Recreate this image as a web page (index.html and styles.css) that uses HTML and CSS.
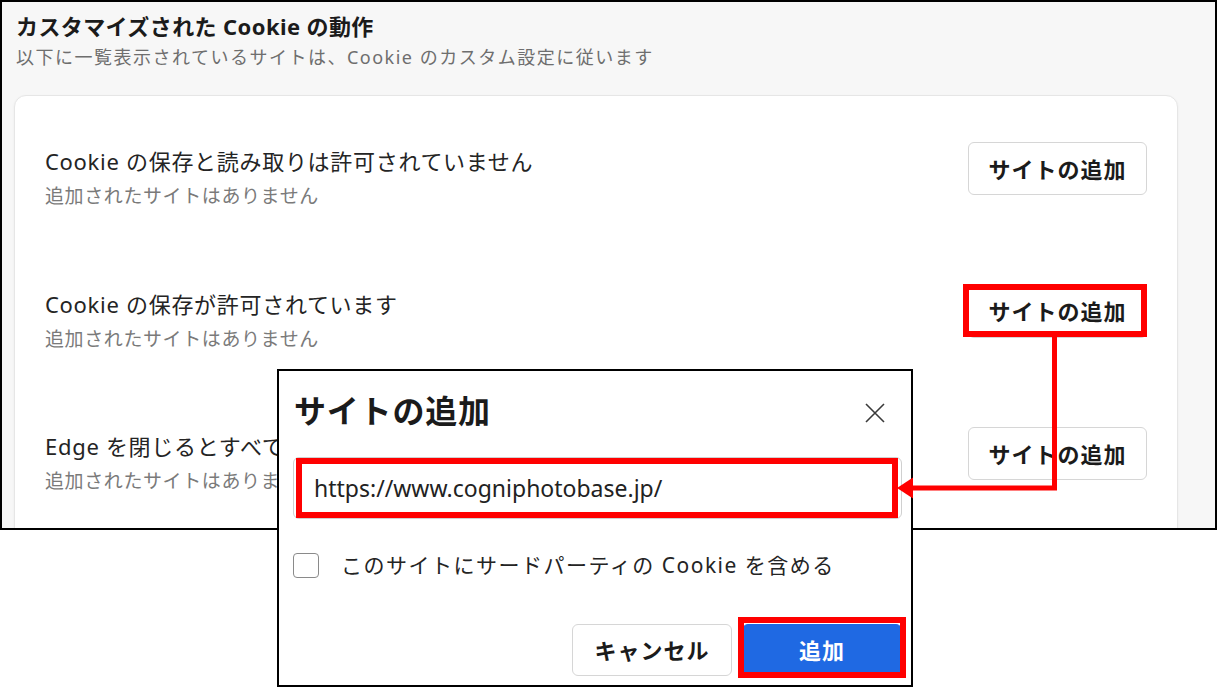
FILE: index.html
```html
<!DOCTYPE html>
<html lang="ja">

<head>
    <meta charset="UTF-8">
    <meta name="viewport" content="width=device-width, initial-scale=1.0">
    <title>サイトの追加</title>
    <link rel="stylesheet" href="styles.css">
</head>

<body>
    <div class="page">
        <!-- 設定画面のスクリーンショット部分 -->
        <div class="shot">
            <div class="section-head">
                <h2 class="section-title">カスタマイズされた Cookie の動作</h2>
                <p class="section-desc">以下に一覧表示されているサイトは、Cookie のカスタム設定に従います</p>
            </div>
            <div class="card">
                <div class="row">
                    <div class="row-text">
                        <div class="row-title">Cookie の保存と読み取りは許可されていません</div>
                        <div class="row-sub">追加されたサイトはありません</div>
                    </div>
                    <button class="btn">サイトの追加</button>
                </div>
                <div class="row">
                    <div class="row-text">
                        <div class="row-title">Cookie の保存が許可されています</div>
                        <div class="row-sub">追加されたサイトはありません</div>
                    </div>
                    <button class="btn">サイトの追加</button>
                </div>
                <div class="row">
                    <div class="row-text">
                        <div class="row-title">Edge を閉じるとすべての Cookie がクリアされます</div>
                        <div class="row-sub">追加されたサイトはありません</div>
                    </div>
                    <button class="btn">サイトの追加</button>
                </div>
            </div>
        </div>

        <!-- ダイアログ -->
        <div class="dialog">
            <div class="dialog-head">
                <h3 class="dialog-title">サイトの追加</h3>
                <span class="dialog-close">
                    <svg width="20" height="20" viewBox="0 0 20 20">
                        <path d="M1 1 L19 19 M19 1 L1 19" stroke="#3a3a3a" stroke-width="1.6" fill="none" />
                    </svg>
                </span>
            </div>
            <input class="url" type="text" value="https://www.cogniphotobase.jp/">
            <label class="check">
                <span class="check-box"></span>
                <span class="check-label">このサイトにサードパーティの Cookie を含める</span>
            </label>
            <div class="dialog-foot">
                <button class="btn btn-cancel">キャンセル</button>
                <button class="btn btn-primary">追加</button>
            </div>
        </div>

        <!-- 赤枠と矢印の注釈 -->
        <svg class="notes" width="1218" height="689" viewBox="0 0 1218 689">
            <g fill="none" stroke="#ff0000" stroke-width="6">
                <rect x="966" y="287" width="178" height="47" />
                <rect x="299" y="461" width="596" height="54" />
                <rect x="741" y="620" width="162" height="55" />
            </g>
            <polyline points="1054.5,337 1054.5,488 911,488" fill="none" stroke="#ff0000" stroke-width="5" />
            <polygon points="897,488 913,477.5 913,498.5" fill="#ff0000" />
        </svg>
    </div>
</body>

</html>
```

FILE: styles.css
```css
* {
    margin: 0;
    padding: 0;
    box-sizing: border-box;
}

body {
    background-color: #fff;
    font-family: "Noto Sans", "Noto Sans CJK JP", sans-serif;
    color: #1b1b1b;
}

.page {
    position: relative;
    width: 1218px;
    height: 689px;
    overflow: hidden;
}

/* 背景のスクリーンショット */
.shot {
    width: 1217px;
    height: 530px;
    border: 2px solid #000;
    background-color: #f7f7f7;
    overflow: hidden;
}

.section-head {
    padding: 9px 0 0 14px;
}

.section-title {
    font-size: 22px;
    line-height: 30px;
    font-weight: 700;
    letter-spacing: .4px;
    color: #1b1b1b;
}

.section-desc {
    margin-top: 3px;
    font-size: 18px;
    line-height: 26px;
    letter-spacing: 1.5px;
    color: #6e6e6e;
}

.card {
    width: 1164px;
    height: 600px;
    margin: 25px 0 0 12px;
    background-color: #fff;
    border: 1px solid #e6e6e6;
    border-radius: 12px;
    box-shadow: 0 1px 3px rgba(0, 0, 0, .05);
}

.row {
    display: flex;
    justify-content: space-between;
    align-items: flex-start;
    padding: 46px 30px 26.5px 30px;
}

.row-text {
    margin-top: 3px;
}

.row-title {
    font-size: 22px;
    line-height: 32px;
    letter-spacing: .7px;
    color: #242424;
    white-space: nowrap;
}

.row-sub {
    margin-top: 3px;
    font-size: 19px;
    line-height: 32px;
    letter-spacing: .6px;
    color: #7a7a7a;
}

.btn {
    width: 179px;
    height: 53px;
    flex: none;
    background-color: #fff;
    border: 1px solid #d6d6d6;
    border-radius: 6px;
    font: 700 22px/1 "Noto Sans", "Noto Sans CJK JP", sans-serif;
    letter-spacing: 1px;
    color: #1b1b1b;
}

/* ダイアログ */
.dialog {
    position: absolute;
    left: 277px;
    top: 369px;
    width: 636px;
    height: 318px;
    padding: 20px 9px 0 14px;
    background-color: #fff;
    border: 2px solid #000;
}

.dialog-head {
    display: flex;
    justify-content: space-between;
    align-items: center;
    height: 40px;
}

.dialog-title {
    padding-left: 1px;
    font-size: 32px;
    line-height: 40px;
    font-weight: 700;
    letter-spacing: .8px;
    color: #1b1b1b;
}

.dialog-close {
    display: flex;
    margin: 4px 17px 0 0;
}

.url {
    display: block;
    width: 100%;
    height: 62px;
    margin-top: 26px;
    padding: 0 20px;
    border: 1px solid #d0d0d0;
    border-radius: 6px;
    font: 23px "Noto Sans", "Noto Sans CJK JP", sans-serif;
    color: #222;
    outline: none;
}

.check {
    display: flex;
    align-items: center;
    gap: 22px;
    height: 30px;
    margin-top: 31px;
}

.check-box {
    width: 26px;
    height: 25px;
    border: 1.5px solid #8a8a8a;
    border-radius: 4px;
}

.check-label {
    font-size: 21px;
    line-height: 30px;
    letter-spacing: 1.5px;
    color: #242424;
}

.dialog-foot {
    display: flex;
    justify-content: flex-end;
    gap: 10px;
    margin-top: 44px;
}

.btn-cancel,
.btn-primary {
    width: 160px;
    height: 52px;
}

.btn-primary {
    background-color: #1f69e3;
    border-color: #1f69e3;
    color: #fff;
}

/* 注釈レイヤー */
.notes {
    position: absolute;
    left: 0;
    top: 0;
    pointer-events: none;
}
```
